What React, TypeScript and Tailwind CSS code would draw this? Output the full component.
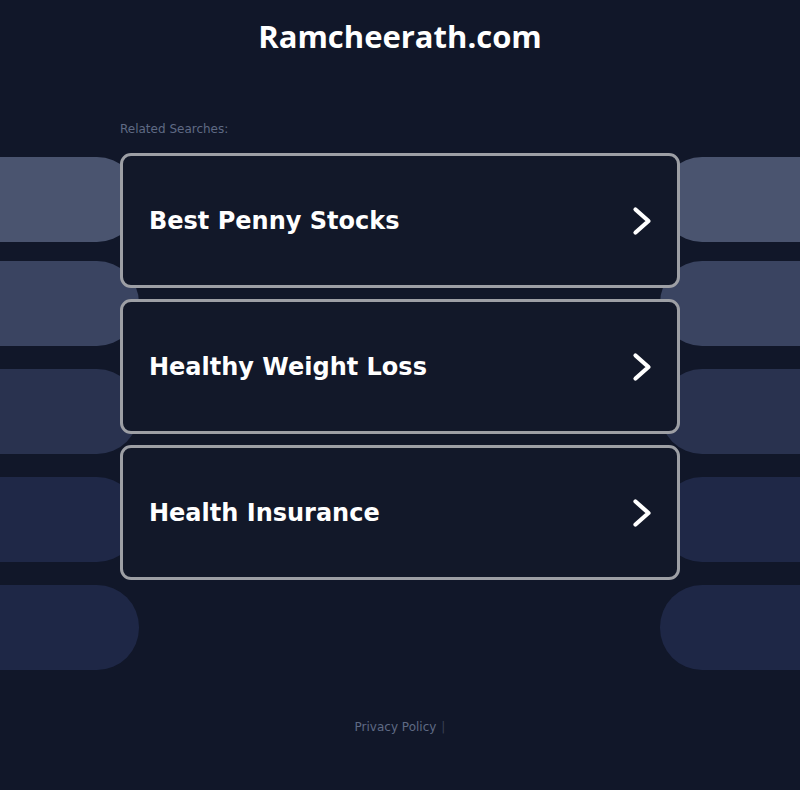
import React from "react";

const searches = ["Best Penny Stocks", "Healthy Weight Loss", "Health Insurance"];

// decorative pills behind the list, top offsets + colours
const pills = [
  { mt: "mt-[157px]", bg: "bg-[#4a546f]" },
  { mt: "mt-[19px]", bg: "bg-[#3a4461]" },
  { mt: "mt-[23px]", bg: "bg-[#29324f]" },
  { mt: "mt-[23px]", bg: "bg-[#1f2847]" },
  { mt: "mt-[23px]", bg: "bg-[#1e2746]" },
];

function Chevron() {
  return (
    <svg className="w-[24px] h-[32px]" viewBox="0 0 24 32" fill="none">
      <path
        d="M5.5 4.5 L18.5 16 L5.5 27.5"
        stroke="white"
        strokeWidth={4.2}
        strokeLinecap="round"
        strokeLinejoin="round"
      />
    </svg>
  );
}

export default function App() {
  return (
    <div
      className="relative min-h-[790px] w-full overflow-hidden bg-[#111729]"
      style={{ fontFamily: "'DejaVu Sans', sans-serif" }}
    >
      {/* Background pills */}
      <div className="absolute left-0 top-0 w-[139px] flex flex-col">
        {pills.map((p, i) => (
          <div key={i} className={`${p.mt} ${p.bg} h-[85px] rounded-r-[42px]`} />
        ))}
      </div>
      <div className="absolute right-0 top-0 w-[140px] flex flex-col">
        {pills.map((p, i) => (
          <div key={i} className={`${p.mt} ${p.bg} h-[85px] rounded-l-[42px]`} />
        ))}
      </div>

      <div className="relative flex flex-col items-center">
        {/* Title */}
        <h1
          className="mt-[17px] text-[31px] leading-[38px] font-bold text-white"
          style={{ fontFamily: "'Open Sans', sans-serif" }}
        >
          Ramcheerath.com
        </h1>

        <div className="w-[560px] mt-[65px]">
          <p className="text-[12px] leading-[16px] text-[#5f6a84] mt-[1px]">Related Searches:</p>

          {/* Cards */}
          <div className="mt-[16px] flex flex-col gap-[11px]">
            {searches.map((s) => (
              <div
                key={s}
                className="h-[135px] rounded-[11px] border-[3px] border-[#9d9fa5] bg-[#121829] flex items-center justify-between pl-[26px] pr-[23px]"
              >
                <span className="text-[24px] font-bold text-white">{s}</span>
                <Chevron />
              </div>
            ))}
          </div>
        </div>

        {/* Footer */}
        <div className="mt-[139px] flex items-center gap-[5px] text-[12px] leading-[16px]">
          <span className="text-[#5f6a84]">Privacy Policy</span>
          <span className="text-[#3a4054]">|</span>
        </div>
      </div>
    </div>
  );
}
